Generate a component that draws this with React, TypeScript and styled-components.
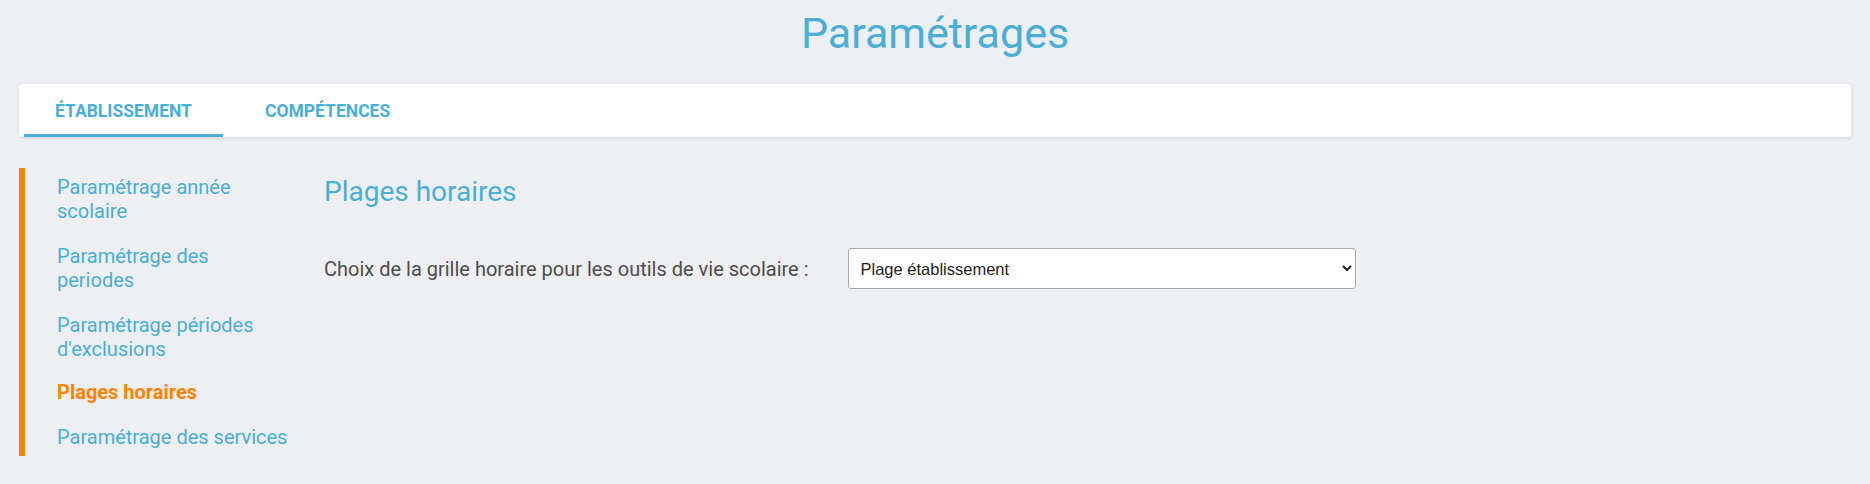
import React from "react";
import { useState } from "react";
import styled, { createGlobalStyle } from "styled-components";

const colors = {
  page: "#eeeff2",
  blue: "#4aaed7",
  orange: "#ff8200",
  text: "#4d4d4d",
  white: "#ffffff",
};

const GlobalStyle = createGlobalStyle`
  html, body {
    margin: 0;
    padding: 0;
    background: ${colors.page};
    font-family: Roboto, "Noto Sans", sans-serif;
  }
`;

const Page = styled.div`
  min-height: 484px;
  padding: 5px 19px 0;
  box-sizing: border-box;
`;

const Title = styled.h1`
  margin: 0;
  font-size: 43px;
  line-height: 56px;
  font-weight: 400;
  text-align: center;
  color: ${colors.blue};
`;

const TabBar = styled.div`
  display: flex;
  gap: 11px;
  margin-top: 23px;
  height: 53px;
  padding-left: 5px;
  background: ${colors.white};
  border-radius: 3px;
  box-shadow: 0 1px 4px rgba(0, 0, 0, 0.12);
`;

const Tab = styled.button<{ $active?: boolean }>`
  display: flex;
  align-items: center;
  padding: 3px 31px 0;
  border: none;
  border-bottom: 3px solid ${(p) => (p.$active ? colors.blue : "transparent")};
  background: none;
  color: ${colors.blue};
  font-family: Roboto, sans-serif;
  font-size: 17.5px;
  font-weight: 700;
  text-transform: uppercase;
  cursor: pointer;
`;

const Body = styled.div`
  display: flex;
  gap: 35.5px;
  margin-top: 31px;
`;

const Side = styled.nav`
  display: flex;
  flex-direction: column;
  gap: 21px;
  width: 231.5px;
  padding: 7px 0 7px 32px;
  border-left: 6px solid ${colors.orange};
`;

const SideLink = styled.a<{ $active?: boolean }>`
  display: block;
  margin-top: ${(p) => (p.$active ? "-2px" : "0")};
  font-size: 20px;
  line-height: 24px;
  font-weight: ${(p) => (p.$active ? 700 : 400)};
  color: ${(p) => (p.$active ? colors.orange : colors.blue)};
  text-decoration: none;
  cursor: pointer;
`;

const Main = styled.section`
  flex: 1;
  padding-top: 6px;
`;

const Heading = styled.h2`
  margin: 0;
  font-size: 28px;
  line-height: 36px;
  font-weight: 400;
  color: ${colors.blue};
`;

const Field = styled.div`
  display: flex;
  align-items: center;
  gap: 39px;
  margin-top: 38px;
`;

const Label = styled.label`
  font-size: 20px;
  color: ${colors.text};
`;

const Select = styled.select`
  width: 508px;
  height: 41px;
  padding: 0 8px;
  border: 1px solid #a9a9ad;
  border-radius: 3px;
  background: ${colors.white};
  color: #222;
  font-family: "Liberation Sans", Arial, sans-serif;
  font-size: 16.5px;
`;

const menu = [
  "Paramétrage année scolaire",
  "Paramétrage des periodes",
  "Paramétrage périodes d'exclusions",
  "Plages horaires",
  "Paramétrage des services",
];

export default function App() {
  const [tab, setTab] = useState(0);
  const [active, setActive] = useState(3);

  return (
    <Page>
      <GlobalStyle />
      <Title>Paramétrages</Title>
      <TabBar>
        {["Établissement", "Compétences"].map((t, i) => (
          <Tab key={t} $active={tab === i} onClick={() => setTab(i)}>
            {t}
          </Tab>
        ))}
      </TabBar>
      <Body>
        <Side>
          {menu.map((m, i) => (
            <SideLink key={m} $active={active === i} onClick={() => setActive(i)}>
              {m}
            </SideLink>
          ))}
        </Side>
        <Main>
          <Heading>Plages horaires</Heading>
          <Field>
            <Label>Choix de la grille horaire pour les outils de vie scolaire :</Label>
            <Select defaultValue="etab">
              <option value="etab">Plage établissement</option>
              <option value="vie">Plage vie scolaire</option>
            </Select>
          </Field>
        </Main>
      </Body>
    </Page>
  );
}
